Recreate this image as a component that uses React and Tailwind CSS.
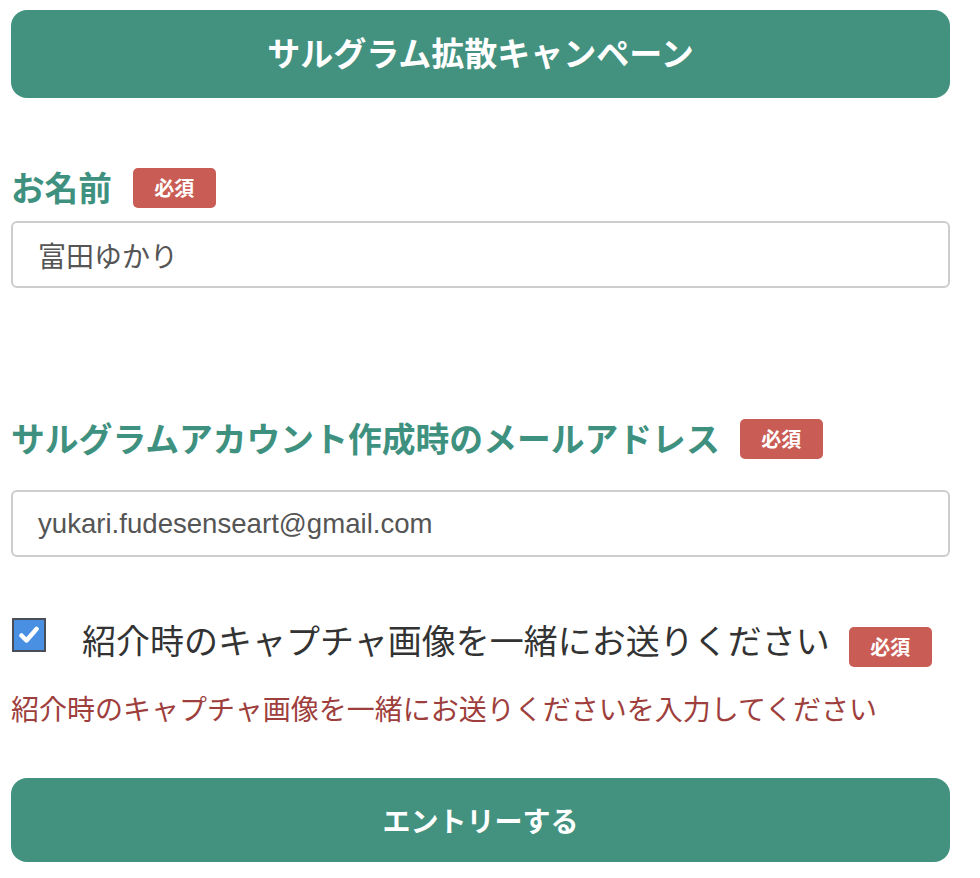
export default function App() {
  const jp = { fontFamily: '"Noto Sans CJK JP", "Noto Sans", sans-serif' };
  const Badge = ({ className = "" }) => (
    <span
      className={`inline-flex h-[40px] w-[83px] shrink-0 items-center justify-center rounded-[5px] bg-[#c95d55] text-[20px] font-bold leading-none text-white ${className}`}
    >
      必須
    </span>
  );
  return (
    <div className="min-h-[878px] w-[980px] bg-white px-[11px] pt-[10px]" style={jp}>
      <div className="flex h-[88px] w-[939px] items-center justify-center rounded-[16px] bg-[#42927f] pb-[3px] text-[33px] font-bold text-white">
        サルグラム拡散キャンペーン
      </div>

      <div className="mt-[70px] flex h-[40px] items-center gap-[21px]">
        <span className="pb-[2px] text-[33.6px] font-bold leading-none text-[#3f917f]">お名前</span>
        <Badge />
      </div>
      <div className="mt-[13px] flex h-[67px] w-[939px] items-center rounded-[6px] border-2 border-[#cdcdcd] pl-[25px] text-[28px] text-[#555555]">
        富田ゆかり
      </div>

      <div className="mt-[131px] flex h-[40px] items-center gap-[20px]">
        <span className="pb-[2px] text-[33.8px] font-bold leading-none text-[#3f917f]">
          サルグラムアカウント作成時のメールアドレス
        </span>
        <Badge />
      </div>
      <div
        className="mt-[31px] flex h-[67px] w-[939px] items-center rounded-[6px] border-2 border-[#cdcdcd] pl-[25px] text-[27.6px] text-[#555555]"
        style={{ fontFamily: '"Liberation Sans", Arial, sans-serif' }}
      >
        yukari.fudesenseart@gmail.com
      </div>

      <div className="mt-[61px] flex items-start">
        <div className="ml-[1px] flex h-[34px] w-[34px] shrink-0 items-center justify-center border-2 border-[#4a4f57] bg-[#4a90e2]">
          <svg width="20" height="18" viewBox="0 0 20 18">
            <path d="M2.5 9.5 L7.5 14.5 L17.5 3" fill="none" stroke="white" strokeWidth="4.5" strokeLinecap="round" strokeLinejoin="round" />
          </svg>
        </div>
        <span className="ml-[36px] text-[34px] leading-[44px] text-[#333333]">
          紹介時のキャプチャ画像を一緒にお送りください
        </span>
        <Badge className="ml-[19px] mt-[9px]" />
      </div>

      <div className="mt-[21px] text-[28px] leading-[40px] text-[#9e3f3d]">
        紹介時のキャプチャ画像を一緒にお送りくださいを入力してください
      </div>

      <div className="mt-[50px] flex h-[84px] w-[939px] items-center justify-center rounded-[16px] bg-[#42927f] text-[28px] font-bold text-white">
        エントリーする
      </div>
    </div>
  );
}
